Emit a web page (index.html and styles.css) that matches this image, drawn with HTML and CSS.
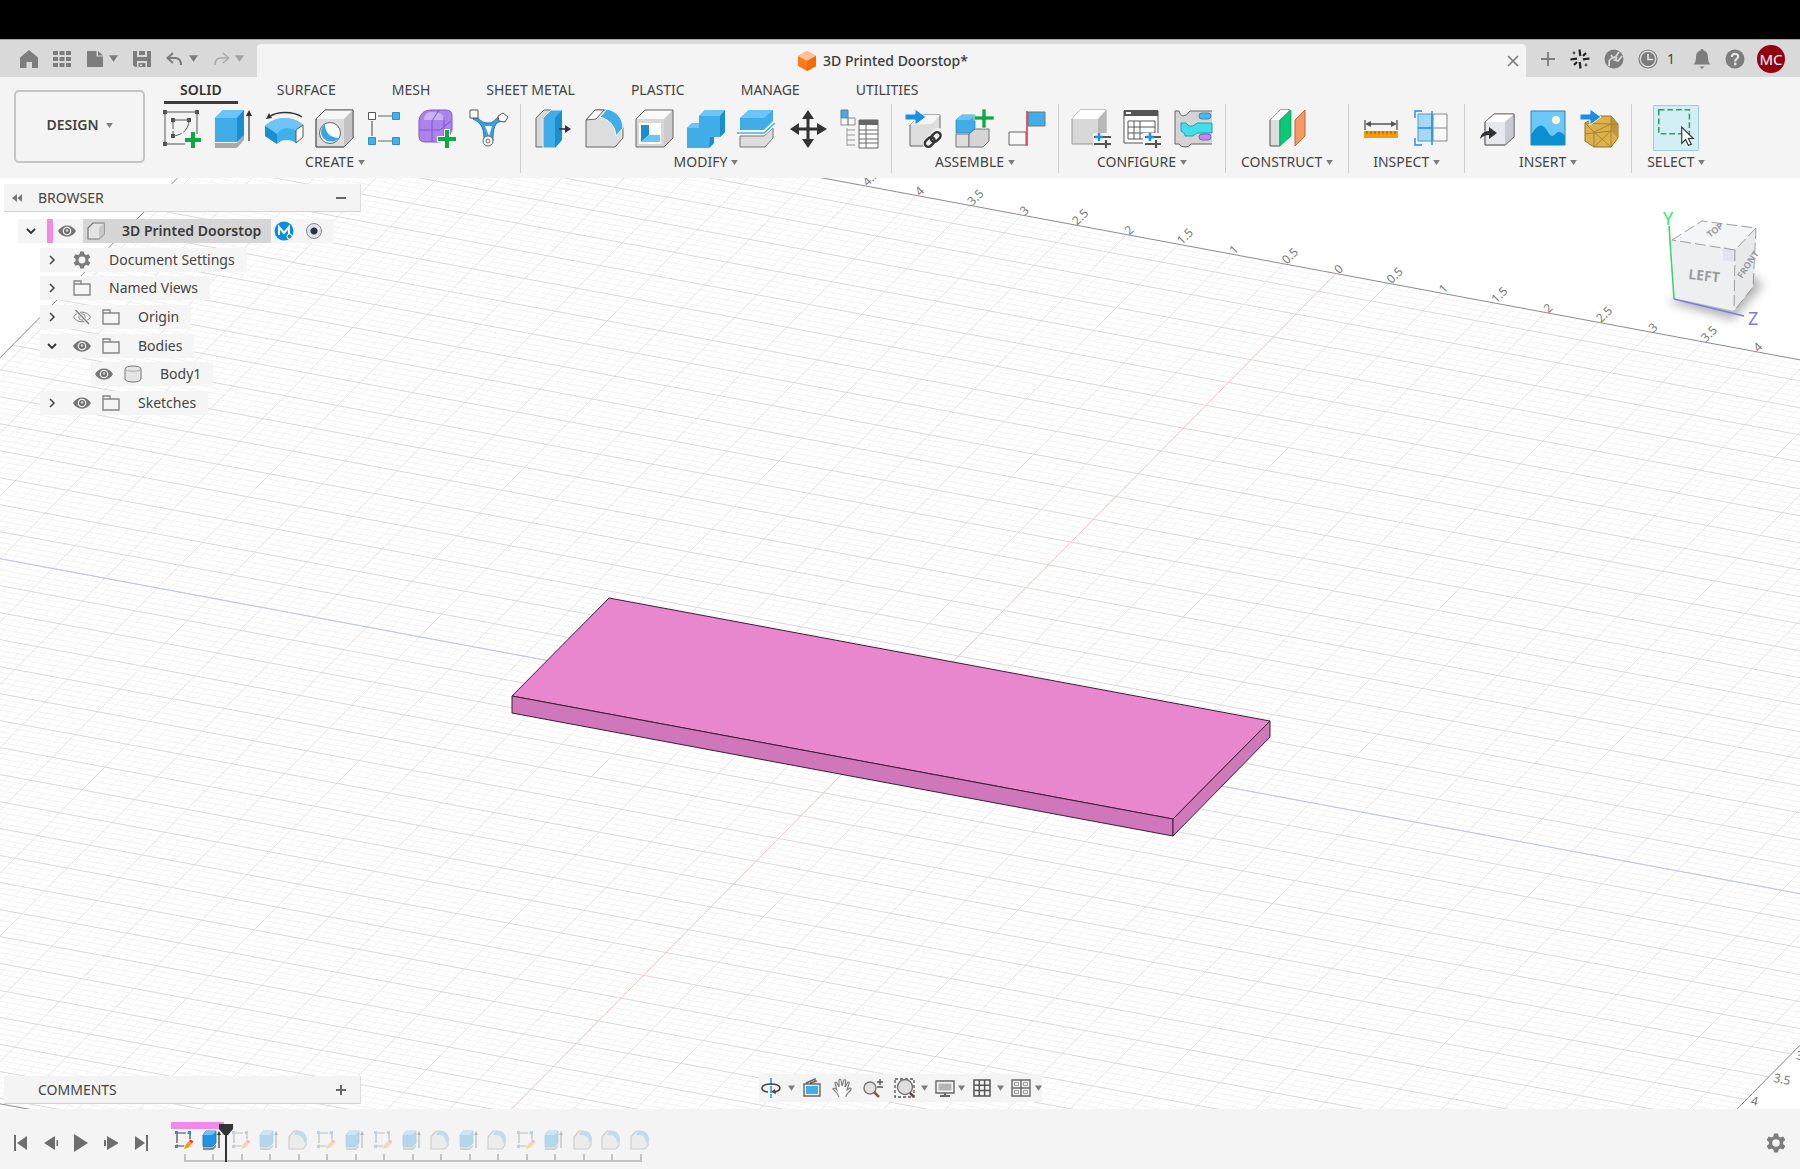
FILE: index.html
```html
<!DOCTYPE html>
<html lang="en">
<head>
<meta charset="utf-8">
<title>3D Printed Doorstop</title>
<link rel="stylesheet" href="styles.css">
</head>
<body>
<svg class="defs" aria-hidden="true">
  <symbol id="caret" viewBox="0 0 8 6"><path d="M0 0h8L4 6z" fill="currentColor"/></symbol>
  <symbol id="chev-right" viewBox="0 0 10 10"><path d="M3 1l4 4-4 4" fill="none" stroke="#444" stroke-width="1.5"/></symbol>
  <symbol id="chev-down" viewBox="0 0 10 10"><path d="M1 3l4 4 4-4" fill="none" stroke="#333" stroke-width="1.8"/></symbol>
  <symbol id="eye" viewBox="0 0 18 18"><path d="M0 9C4 1.500 14 1.500 18 9 14 16.500 4 16.500 0 9z" fill="#757575"/><circle cx="9" cy="9" r="4.300" fill="#f4f4f4"/><circle cx="9" cy="9" r="3" fill="#6a6a6a"/><circle cx="9" cy="8.500" r="1.300" fill="#ddd"/></symbol>
  <symbol id="eye-off" viewBox="0 0 18 18"><path d="M0.500 9C4.500 2.500 13.500 2.500 17.500 9 13.500 15.500 4.500 15.500 0.500 9z" fill="none" stroke="#858585"/><circle cx="9" cy="9" r="3.200" fill="none" stroke="#858585"/><path d="M2.500 2l13.500 14" stroke="#f4f4f4" stroke-width="3"/><path d="M2.500 2l13.500 14" stroke="#757575" stroke-width="1.200"/></symbol>
  <symbol id="folder" viewBox="0 0 18 16"><path d="M1 1h7v3h9v11H1z M1 4h7" fill="none" stroke="#858585" stroke-width="1.400"/></symbol>
  <symbol id="gear" viewBox="0 0 20 20"><path d="M8 0.500h4l.6 2.900 1.900 1.100 2.800-1 2 3.500-2.200 1.900v2.200l2.200 1.900-2 3.500-2.800-1-1.900 1.100-.6 2.900H8l-.6-2.900-1.900-1.100-2.800 1-2-3.500 2.200-1.900V8.900L.7 7l2-3.500 2.800 1 1.900-1.100zM10 6.200a3.800 3.800 0 100 7.600 3.800 3.800 0 000-7.600z" fill="#7d7d7d" fill-rule="evenodd"/></symbol>
  <symbol id="t-sketch" viewBox="0 0 20 20"><path d="M3 3h13v13H3z" fill="none" stroke="#444" stroke-width="1.200" stroke-dasharray="9 1.500"/><path d="M1 1h3v3H1zM14 1h3v3h-3zM1 15h3v3H1z" fill="#1f8fd8"/><path d="M9 20l2-5 5-6 4 2.500-5 6.500z" fill="#f4f4f4"/><path d="M10 19l1.500-4 3.500-4 3 2.500-3.500 4z" fill="#f39c12"/><path d="M15 11l1.500-1.500 3 2L18 13.500z" fill="#e33"/></symbol>
  <symbol id="t-extrude" viewBox="0 0 20 20"><path d="M1 17.500h9.500l3.500-3v2.500L11 20H1z" fill="#888"/><path d="M1 5l3-4h10v12l-3.500 3.500H1z" fill="#2196e0" stroke="#1c6ea6" stroke-width=".8"/><path d="M1 5l3-4h10l-3.500 4z" fill="#6cc4f7"/><path d="M17 18V3" stroke="#333" stroke-width="1.200"/><path d="M15 5l2-4 2 4z" fill="#333"/></symbol>
  <symbol id="t-fillet" viewBox="0 0 20 20"><path d="M1 7l5-6h4c5 0 8 4 8 8v6l-3 4H1z" fill="#ddd" stroke="#777" stroke-width="1.200"/><path d="M8 1h3c5 0 8 5 8 9l-3 3c0-5-3-8-7-8H6z" fill="#45aee8"/></symbol>
</svg>

<div class="app">
  <div class="strip"></div>

  <header class="topbar">
    <nav class="quick" aria-label="Quick access">
      <button class="tool q-home" aria-label="Home"><svg width="18" height="18" viewBox="0 0 18 18"><path d="M0 7.500L9 0l9 7.500V18h-6v-6H6.500v6H0z" fill="#7d7d7d"/></svg></button>
      <button class="tool q-grid" aria-label="Data panel"><svg width="18" height="18" viewBox="0 0 18 18"><path d="M0 1h5v4H0zM6.500 1h5v4h-5zM13 1h5v4h-5zM0 7h5v4H0zM6.500 7h5v4h-5zM13 7h5v4h-5zM0 13h5v4H0zM6.500 13h5v4h-5zM13 13h5v4h-5z" fill="#7d7d7d"/></svg></button>
      <button class="tool q-file" aria-label="File"><svg width="18" height="18" viewBox="0 0 18 18"><path d="M1 1h9.500v5.500H17V17H1zM12 1l5 4.500h-5z" fill="#7d7d7d"/></svg><svg class="caret" width="9" height="7"><use href="#caret"/></svg></button>
      <button class="tool q-save" aria-label="Save"><svg width="18" height="18" viewBox="0 0 18 18"><path d="M0 1h4v6h10V1h4v16h-4v-6H4v6H2l-2-2zM6 1h6v4H6zM5.500 13h7v4h-7z" fill="#7d7d7d"/><path d="M7 14.500h2V16H7z" fill="#d9d9d9"/></svg></button>
      <button class="tool q-undo" aria-label="Undo"><svg width="18" height="14" viewBox="0 0 18 14"><path d="M2 6h7c4 0 6 3 6 7" fill="none" stroke="#7d7d7d" stroke-width="2"/><path d="M7 1L1.500 6 7 11" fill="none" stroke="#7d7d7d" stroke-width="2"/></svg><svg class="caret" width="9" height="7"><use href="#caret"/></svg></button>
      <button class="tool q-redo" aria-label="Redo"><svg width="18" height="14" viewBox="0 0 18 14"><path d="M16 6H9c-4 0-6 3-6 7" fill="none" stroke="#a9a9a9" stroke-width="1.600"/><path d="M11 1l5.500 5L11 11" fill="none" stroke="#a9a9a9" stroke-width="1.600"/></svg><svg class="caret faint" width="9" height="7"><use href="#caret"/></svg></button>
    </nav>
    <div class="doc-tab">
      <svg width="18" height="20" viewBox="0 0 18 20"><path d="M9 0l9 5v10l-9 5-9-5V5z" fill="#ff7a1a"/><path d="M9 0l9 5-9 5-9-5z" fill="#ffc09a"/><path d="M9 10l9-5v10l-9 5z" fill="#f56a06"/></svg>
      <span class="doc-title">3D Printed Doorstop*</span>
      <button class="tool doc-close" aria-label="Close"><svg width="12" height="12" viewBox="0 0 12 12"><path d="M1 1l10 10M11 1L1 11" stroke="#777" stroke-width="1.500"/></svg></button>
    </div>
    <nav class="status" aria-label="Account">
      <button class="tool" aria-label="New tab"><svg width="16" height="16" viewBox="0 0 16 16"><path d="M8 1v14M1 8h14" stroke="#7d7d7d" stroke-width="1.800"/></svg></button>
      <button class="tool" aria-label="Extensions"><svg width="20" height="20" viewBox="0 0 20 20"><g stroke="#222" stroke-width="2.200"><path d="M9.500 0.500l.8 6.500M19.500 9.500l-6.500.8M10.500 19.500l-.8-6.500M.5 10.500l6.500-.8M4 16l3-3M16 4l-3 3" /></g><g fill="#555"><circle cx="4" cy="4" r="1.400"/><circle cx="16" cy="16" r="1.400"/></g></svg></button>
      <button class="tool" aria-label="Online"><svg width="20" height="20" viewBox="0 0 20 20"><circle cx="10" cy="10" r="9.500" fill="#7d7d7d"/><path d="M5 17c0-5 0-7 4-8l-2-3M9 9c3-3 5 0 2 2l3 1 4-5M12 7l3-4" fill="none" stroke="#d9d9d9" stroke-width="1.800"/></svg></button>
      <button class="tool jobs" aria-label="Job status"><svg width="20" height="20" viewBox="0 0 20 20"><circle cx="10" cy="10" r="9" fill="none" stroke="#7d7d7d" stroke-width="1.200"/><circle cx="10" cy="10" r="7" fill="#7d7d7d"/><path d="M10 5v5.500h5" fill="none" stroke="#e6e6e6" stroke-width="1.600"/></svg><span>1</span></button>
      <button class="tool" aria-label="Notifications"><svg width="18" height="20" viewBox="0 0 18 20"><path d="M9 0c1 0 1.500.6 1.500 1.500C14 2.200 15 5 15 9c0 3 1 5 2.500 6.500H.5C2 14 3 12 3 9c0-4 1-6.800 4.500-7.500C7.500.6 8 0 9 0zM6.500 17.500h5L9 20z" fill="#7d7d7d"/></svg></button>
      <button class="tool" aria-label="Help"><svg width="20" height="20" viewBox="0 0 20 20"><circle cx="10" cy="10" r="9.500" fill="#7d7d7d"/><path d="M6.800 8c0-4.200 6.400-4 6.400-.6 0 2.300-3 2.300-3 5" fill="none" stroke="#e4e4e4" stroke-width="2.200"/><circle cx="10.200" cy="15" r="1.400" fill="#e4e4e4"/></svg></button>
      <button class="avatar">MC</button>
    </nav>
  </header>

  <section class="ribbon">
    <button class="workspace-switch">DESIGN <svg class="caret" width="7" height="5"><use href="#caret"/></svg></button>
    <div class="ribbon-body">
      <div class="tabs" role="tablist">
        <button class="tab active" role="tab" aria-selected="true">SOLID</button>
        <button class="tab" role="tab">SURFACE</button>
        <button class="tab" role="tab">MESH</button>
        <button class="tab" role="tab">SHEET METAL</button>
        <button class="tab" role="tab">PLASTIC</button>
        <button class="tab" role="tab">MANAGE</button>
        <button class="tab" role="tab">UTILITIES</button>
      </div>
      <div class="groups">
        <div class="group">
          <div class="icons">
            <button class="ico" aria-label="Create sketch"><svg viewBox="0 0 40 40"><path d="M3 4h32v22M3 4v32h20" fill="none" stroke="#555"/><path d="M11 12h16c0 9-6 15-16 16z" fill="none" stroke="#555" stroke-dasharray="14 2"/><path d="M1 2h4v4H1zM33 2h4v4h-4zM1 34h4v4H1zM9 10h4v4H9zM25 10h4v4h-4zM9 26h4v4H9z" fill="#555"/><path d="M28 23h6v6h6v6h-6v6h-6v-6h-6v-6h6z" fill="#f4f4f4"/><path d="M29 24h4v6h6v4h-6v6h-4v-6h-6v-4h6z" fill="#0ca944"/></svg></button>
            <button class="ico" aria-label="Extrude"><svg viewBox="0 0 40 40"><path d="M2 35h22l7-8v5l-7 8H2z" fill="#aaa"/><path d="M2 10l8-8h21v25l-7 7H2z" fill="#41ade8"/><path d="M2 10l8-8h21l-7 8z" fill="#6cc4f7"/><path d="M24 10l7-8v25l-7 7z" fill="#1a8fd0"/><path d="M36 33V5" stroke="#333" stroke-width="1.200"/><path d="M33 8l3-6 3 6z" fill="#333"/></svg></button>
            <button class="ico" aria-label="Revolve"><svg viewBox="0 0 40 40"><path d="M5 9c8-6 24-6 33 0" fill="none" stroke="#333" stroke-width="1.300"/><path d="M2 11l3-6 3 5z" fill="#333"/><path d="M1 18c10-10 27-11 38-1l-7 6v12c-5-4-15-4-19 1L1 28z" fill="#3fb0ea"/><path d="M1 18c10-10 27-11 38-1l-7 6c-5-4-15-4-19 3z" fill="#6cc4f7"/><path d="M1 18l12 8v10L1 28z" fill="#1a8fd0"/><path d="M32 22l7-5v12l-7 6z" fill="#fff" stroke="#555"/></svg></button>
            <button class="ico" aria-label="Hole"><svg viewBox="0 0 40 40"><path d="M1 11l9-9h28v28l-9 9H1z" fill="#ddd" stroke="#666"/><path d="M1 11l9-9h28l-9 9z" fill="#f7f7f7"/><path d="M29 11l9-9v28l-9 9z" fill="#c4c4c4"/><path d="M1 11l9-9h28v28l-9 9H1z" fill="none" stroke="#666"/><circle cx="15" cy="25" r="10.500" fill="#fff" stroke="#666"/><path d="M10 16c0 9 6 14 14 14-6 7-17 3-18-5 0-4 1-7 4-9z" fill="#38a7e6"/></svg></button>
            <button class="ico" aria-label="Rectangular pattern"><svg viewBox="0 0 40 40"><path d="M12 8h14M6 13v15M12 33h14" stroke="#666" stroke-width="1.200"/><path d="M2.500 4.500h7v7h-7z" fill="#fff" stroke="#555"/><path d="M26.500 4.500h7v7h-7zM2.500 29.500h7v7h-7zM26.500 29.500h7v7h-7z" fill="#42afee" stroke="#2f8fc8"/></svg></button>
            <button class="ico" aria-label="Create form"><svg viewBox="0 0 40 40"><path d="M2 12Q4 2 14 2h15q6 0 6 6v14q-4 12-14 12H8q-6 0-6-6z" fill="#ab82ee" stroke="#8557c4"/><path d="M7 12h21q-1-8-13-8Q7 4 7 12z" fill="#cdb2fa"/><path d="M2 22h21l11-9M15 34V13L22 2M27 9v22" fill="none" stroke="#8057be"/><path d="M27 21h6v7h7v6h-7v7h-6v-7h-7v-6h7z" fill="#f4f4f4"/><path d="M28 22h4v7h7v4h-7v7h-4v-7h-7v-4h7z" fill="#0ca944"/></svg></button>
            <button class="ico" aria-label="Automated modeling"><svg viewBox="0 0 40 40"><path d="M5 7c6 1 6 8 15 8 7 0 6-5 12-6l1 4c-6 2-8 6-8 20h-9c0-10-1-18-11-22z" fill="#3a9fe0" stroke="#2879b4"/><path d="M17 18h7l-3 10z" fill="#fff"/><path d="M2 2h8v8H2z" fill="#fff" stroke="#555"/><path d="M30 8l5-3 5 4-3 5-6-1z" fill="#fff" stroke="#555"/><circle cx="20" cy="33" r="5" fill="#fff" stroke="#666"/><circle cx="20" cy="33" r="2" fill="none" stroke="#666"/></svg></button>
          </div>
          <button class="group-label">CREATE<svg class="caret" width="7" height="5"><use href="#caret"/></svg></button>
        </div>
        <div class="group">
          <div class="icons">
            <button class="ico" aria-label="Press pull"><svg viewBox="0 0 40 40"><path d="M3 10l8-8h7v37H3z" fill="#d8d8d8" stroke="#666"/><path d="M10 10l8-8h11v30l-7 8H10z" fill="#41ade8" stroke="#f4f4f4"/><path d="M22 10l7-8v30l-7 8z" fill="#1a8fd0"/><path d="M26 21h7" stroke="#333" stroke-width="1.600"/><path d="M32 17l6 4-6 4z" fill="#333"/></svg></button>
            <button class="ico" aria-label="Fillet"><svg viewBox="0 0 40 40"><path d="M2 12l9-10h8c12 0 20 10 20 19v9l-8 9H2z" fill="#ddd" stroke="#666"/><path d="M2 12l9-10h9l-8 9z" fill="#fff" stroke="#666"/><path d="M23 1c10 2 16 10 16 19l-7 8C31 18 26 12 16 9z" fill="#41ade8" stroke="#fff"/></svg></button>
            <button class="ico" aria-label="Shell"><svg viewBox="0 0 40 40"><path d="M1 11l9-9h28v28l-9 9H1z" fill="#d8d8d8"/><path d="M1 11l9-9h28l-9 9z" fill="#fafafa"/><path d="M29 11l9-9v28l-9 9z" fill="#ccc"/><path d="M1 11l9-9h28v28l-9 9H1z" fill="none" stroke="#666"/><path d="M4 15h22v21H4z" fill="#fff"/><path d="M6 17h8v10l-8 7z" fill="#1a8fd0"/><path d="M14 27h11v7H6z" fill="#6cc4f7"/></svg></button>
            <button class="ico" aria-label="Combine"><svg viewBox="0 0 40 40"><path d="M1 20l5-5h7V8l6-6h20v22l-5 5h-6v6l-5 5H1z" fill="#41ade8"/><path d="M1 20l5-5h7v5zM13 8l6-6h20l-5 6z" fill="#6cc4f7"/><path d="M34 8l5-6v22l-5 5zM24 29h4v6l-5 5z" fill="#1a8fd0"/></svg></button>
            <button class="ico" aria-label="Split body"><svg viewBox="0 0 40 40"><path d="M3 28h24l9-8v10l-8 9H3z" fill="#ddd" stroke="#777"/><path d="M3 10l9-8h24v11l-9 9H3z" fill="#41ade8"/><path d="M3 10l9-8h24l-9 8z" fill="#6cc4f7"/><path d="M0 25h27l11-10" fill="none" stroke="#fff" stroke-width="4"/><path d="M0 25h27l11-10" fill="none" stroke="#41ade8" stroke-width="1.600"/></svg></button>
            <button class="ico" aria-label="Move"><svg viewBox="0 0 40 40"><path d="M20 8v25M8 21h24" stroke="#333" stroke-width="3"/><path d="M14 11l6-9 6 9zM14 31l6 9 6-9zM11 15l-9 6 9 6zM29 15l10 6-10 6z" fill="#333"/></svg></button>
            <button class="ico" aria-label="Parameters"><svg viewBox="0 0 40 40"><path d="M2 2h7v8H2z" fill="#41ade8" stroke="#777"/><path d="M2 10h7v7H2zM9 10h7v7H9z" fill="#fff" stroke="#888"/><path d="M8 20v18M8 22h8M8 27h8M8 32h8M8 37h8" stroke="#999"/><path d="M20 12h19v28H20z" fill="#fff" stroke="#666"/><path d="M20 12h19v5H20z" fill="#666"/><path d="M20 22h19M20 26h19M20 31h19M20 35h19M27 17v23" stroke="#666"/></svg></button>
          </div>
          <button class="group-label">MODIFY<svg class="caret" width="7" height="5"><use href="#caret"/></svg></button>
        </div>
        <div class="group">
          <div class="icons">
            <button class="ico" aria-label="Insert component"><svg viewBox="0 0 40 40"><path d="M6 17l10-10h20v24l-8 7H6z" fill="#ddd" stroke="#666"/><path d="M6 17l10-10h20l-8 9z" fill="#f5f5f5"/><path d="M1 6h10V1l11 8-11 8v-5H1z" fill="#1a8fe8" stroke="#f4f4f4"/><g fill="none" stroke="#f4f4f4" stroke-width="6"><rect x="-5" y="-3" width="11" height="7" rx="3.500" transform="translate(26 34) rotate(-45)"/><rect x="-5" y="-3" width="11" height="7" rx="3.500" transform="translate(32 28) rotate(-45)"/></g><g fill="none" stroke="#333" stroke-width="2.400"><rect x="-5" y="-3" width="11" height="7" rx="3.500" transform="translate(25 34) rotate(-45)"/><rect x="-5" y="-3" width="11" height="7" rx="3.500" transform="translate(31 29) rotate(-45)"/></g></svg></button>
            <button class="ico" aria-label="New component"><svg viewBox="0 0 40 40"><path d="M1 26h13v13H1z" fill="#ddd" stroke="#777"/><path d="M14 26l6-5h14v12l-6 6H14z" fill="#d5d5d5" stroke="#777"/><path d="M1 12l6-5h13v13l-5 5H1z" fill="#41ade8" stroke="#2a82b8" stroke-width=".7"/><path d="M1 12l6-5h13l-5 5z" fill="#6cc4f7"/><path d="M27 1h4v7h8v4h-8v8h-4v-8h-8V8h8z" fill="#0ca944" stroke="#f4f4f4" stroke-width=".7"/></svg></button>
            <button class="ico" aria-label="Joint"><svg viewBox="0 0 40 40"><path d="M3 24h17v13H3z" fill="#f8f8f8" stroke="#666"/><path d="M22 4h17v14H22z" fill="#41ade8" stroke="#777"/><path d="M21 3v35" stroke="#d23" stroke-width="1.400"/></svg></button>
          </div>
          <button class="group-label">ASSEMBLE<svg class="caret" width="7" height="5"><use href="#caret"/></svg></button>
        </div>
        <div class="group">
          <div class="icons">
            <button class="ico" aria-label="Configure"><svg viewBox="0 0 40 40"><path d="M1 11l8-9h26v25l-8 9H1z" fill="#d8d8d8" stroke="#999"/><path d="M1 11l8-9h26l-8 9z" fill="#fff"/><path d="M27 11l8-9v25l-8 9z" fill="#b8b8b8"/><path d="M22 25h20v15H22z" fill="#f4f4f4"/><path d="M23 29h17M23 36h17M35 32v8" stroke="#555" stroke-width="2.200"/><path d="M28 25v8M24 29h8" stroke="#1a8fe8" stroke-width="2.400"/></svg></button>
            <button class="ico" aria-label="Configuration table"><svg viewBox="0 0 40 40"><path d="M2 3h34v32H2z" fill="#fff" stroke="#555"/><path d="M2 2h34v6H2z" fill="#555"/><path d="M4 4h5v2H4z" fill="#fff"/><path d="M6 13h27v18H6zM6 19h27M6 25h27M12 13v18M18 13v18" fill="none" stroke="#555"/><path d="M21 25h20v15H21z" fill="#f4f4f4"/><path d="M23 29h16M23 36h16M34 32v8" stroke="#555" stroke-width="2.200"/><path d="M28 25v8M24 29h8" stroke="#1a8fe8" stroke-width="2.400"/></svg></button>
            <button class="ico" aria-label="Configuration rules"><svg viewBox="0 0 40 40"><path d="M39 3H17q-3 5-7 5-3 0-4-5H2v33h4q2 3 6 3t6-3h21" fill="#d4d4d4" stroke="#666"/><path d="M39 15H24l-4 3h-4l-3-3H8v8l4 3v2h8l4-3h15z" fill="#3fe0ea" stroke="#2a9ca8"/><rect x="26" y="5" width="12" height="6" rx="3" fill="#4ab8f2" stroke="#3a88b8"/><rect x="26" y="26" width="12" height="6" rx="3" fill="#c08af5" stroke="#8a5ab8"/></svg></button>
          </div>
          <button class="group-label">CONFIGURE<svg class="caret" width="7" height="5"><use href="#caret"/></svg></button>
        </div>
        <div class="group">
          <div class="icons">
            <button class="ico" aria-label="Offset plane"><svg viewBox="0 0 40 40"><path d="M3 12L13 2h10L13 12v26H3z" fill="#ddd" stroke="#555"/><path d="M3 12L13 2h10L13 12z" fill="#fff"/><path d="M13 12L24 2v26L13 38z" fill="#0bc878" stroke="#0a9b5c" stroke-width=".7"/><path d="M28 12L38 2v26L28 38z" fill="#f49a62" stroke="#b8663a"/></svg></button>
          </div>
          <button class="group-label">CONSTRUCT<svg class="caret" width="7" height="5"><use href="#caret"/></svg></button>
        </div>
        <div class="group">
          <div class="icons">
            <button class="ico" aria-label="Measure"><svg viewBox="0 0 40 40"><path d="M4 12v10M36 12v10M6 16h28" stroke="#555" stroke-width="1.300"/><path d="M4 16l6-3v6zM36 16l-6-3v6z" fill="#555"/><path d="M3 23h34v7H3z" fill="#f79a0c"/><path d="M6 23v3M10 23v3M14 23v3M18 23v3M22 23v3M26 23v3M30 23v3M34 23v3" stroke="#8a5500"/></svg></button>
            <button class="ico" aria-label="Section analysis"><svg viewBox="0 0 40 40"><path d="M21 6h14v27H21zM21 20h14" fill="#f8f8f8" stroke="#888"/><path d="M6 6h14v27H6z" fill="#a8d8f6" stroke="#3a9fe0"/><path d="M6 20h14M20 3v34M3 10V3h7M3 30v7h7" fill="none" stroke="#1a8fe0" stroke-width="1.400"/></svg></button>
          </div>
          <button class="group-label">INSPECT<svg class="caret" width="7" height="5"><use href="#caret"/></svg></button>
        </div>
        <div class="group">
          <div class="icons">
            <button class="ico" aria-label="Insert derive"><svg viewBox="0 0 40 40"><path d="M8 14l9-8h20v23l-9 8H8z" fill="#e6e8ee" stroke="#777"/><path d="M8 14l9-8h20l-9 8z" fill="#fff"/><path d="M28 14l9-8v23l-9 8z" fill="#c8cad2"/><path d="M8 14l9-8h20v23l-9 8H8z" fill="none" stroke="#777"/><path d="M3 31c1-6 5-8 9-8v-4l8 6-8 6v-4c-4 0-6 1-9 4z" fill="#333"/></svg></button>
            <button class="ico" aria-label="Canvas"><svg viewBox="0 0 40 40"><path d="M3 3h34v34H3z" fill="#6cc8fa" stroke="#2a82b8"/><circle cx="28" cy="12" r="4" fill="#fdf6d0"/><path d="M3 27c5-8 9-12 13-8 4 3 5 9 8 9s4-4 7-4 4 2 6 4v9H3z" fill="#0a8fd0"/></svg></button>
            <button class="ico" aria-label="Insert mesh"><svg viewBox="0 0 40 40"><path d="M6 15l12-7h14l7 8v14l-7 9H15l-9-6z" fill="#dcb14c" stroke="#96701c"/><path d="M32 8l7 8v14l-7-7z" fill="#c0943a"/><path d="M6 15l9 9 17-8 7 0M15 24l17 15M6 26l26-3M15 39l17-16M6 15l26 1M15 24v15M32 8v31" fill="none" stroke="#a17d2e" stroke-width=".9"/><path d="M1 6h10V1l11 8-11 8v-5H1z" fill="#1a8fe8" stroke="#f4f4f4"/></svg></button>
          </div>
          <button class="group-label">INSERT<svg class="caret" width="7" height="5"><use href="#caret"/></svg></button>
        </div>
        <div class="group">
          <div class="icons">
            <button class="ico selected" aria-label="Select"><svg viewBox="0 0 46 46"><path d="M5 4h32v25H5z" fill="none" stroke="#22a558" stroke-width="1.600" stroke-dasharray="6 3"/><path d="M29 22v17l4-4 3 6 3-1-3-6h5z" fill="#fff" stroke="#333" stroke-width="1.200"/></svg></button>
          </div>
          <button class="group-label">SELECT<svg class="caret" width="7" height="5"><use href="#caret"/></svg></button>
        </div>
      </div>
    </div>
  </section>

  <main class="viewport">
    <svg class="scene" viewBox="0 178 1800 931" preserveAspectRatio="xMidYMid slice">
      <path id="minor" class="grid-minor"/>
      <path id="major-v" class="grid-major light"/>
      <path id="major-u" class="grid-major"/>
      <path id="border" class="grid-border"/>
      <path id="axis-z" stroke="#c2c2f5"/>
      <path id="axis-x" stroke="#f8c8c6"/>
      <g id="ruler" class="ruler"></g>
      <g stroke="#3a1f38" stroke-linejoin="round">
        <path d="M609 598L1270 721L1173 819L512 696z" fill="#e887cd"/>
        <path d="M512 696L1173 819V836L512 713z" fill="#d077bc"/>
        <path d="M1173 819L1270 721V737L1173 836z" fill="#cf7ab8"/>
      </g>
    </svg>

    <svg class="viewcube" width="150" height="140" viewBox="1650 200 150 140" role="img" aria-label="View cube">
      <defs><filter id="soft" x="-50%" y="-50%" width="200%" height="200%"><feGaussianBlur stdDeviation="5"/></filter></defs>
      <path d="M1667 302l66 18 30-34-10-12z" fill="#999" opacity=".7" filter="url(#soft)"/>
      <path d="M1672 240l30-19 54 7-21 22z" fill="#f4f5f6"/>
      <path d="M1672 240l63 10-1 61-60-13z" fill="#eeeff1"/>
      <path d="M1735 250l21-22-3 59-19 24z" fill="#e8e9eb"/>
      <path d="M1723 246l12 4v12l-12-2z" fill="#dfe3ee"/>
      <path d="M1672 240l30-19 54 7-21 22zM1735 250l-1 61M1756 228l-3 59-19 24" fill="none" stroke="#888" stroke-width=".8" stroke-dasharray="11 4"/>
      <path d="M1669 226l5 73" stroke="#37d867" stroke-width="1.600"/>
      <path d="M1674 299l70 17" stroke="#7b7be8" stroke-width="1.600"/>
      <text x="1663" y="225" class="axis-label" fill="#37e86a">Y</text>
      <text x="1748" y="325" class="axis-label" fill="#7b7bf0">Z</text>
      <text class="face" transform="translate(1688 279) rotate(6)">LEFT</text>
      <text class="face small" transform="translate(1742 279) rotate(-56)">FRONT</text>
      <text class="face small" transform="translate(1710 238) rotate(-38)">TOP</text>
    </svg>

    <aside class="side">
      <section class="browser">
        <div class="panel-head">
          <button class="tool head-collapse" aria-label="Collapse"><svg width="10" height="8" viewBox="0 0 10 8"><path d="M5 0v8L0 4zM10 0v8L5.500 4z" fill="#777"/></svg></button>
          <h2>BROWSER</h2>
          <button class="tool head-action" aria-label="Minimize"><svg width="10" height="10" viewBox="0 0 10 10"><path d="M0 5h10" stroke="#666" stroke-width="2"/></svg></button>
        </div>
        <ul class="tree">
          <li class="row root">
            <button class="tool twist" aria-label="Collapse"><svg width="10" height="10"><use href="#chev-down"/></svg></button>
            <i class="tag"></i>
            <button class="tool vis" aria-label="Hide"><svg width="18" height="18"><use href="#eye"/></svg></button>
            <span class="node"><svg width="18" height="18" viewBox="0 0 18 18"><path d="M1 6l5-5h11v11l-5 5H1z" fill="#e4e4e4" stroke="#777" stroke-width="1.200"/><path d="M12 6l5-5v11l-5 5z" fill="#c8c8c8"/></svg><b>3D Printed Doorstop</b></span>
            <svg class="badge" width="20" height="20" viewBox="0 0 20 20"><circle cx="10" cy="10" r="9.500" fill="#0b8fdc"/><path d="M5 14V6l5 6 5-6v8" fill="none" stroke="#fff" stroke-width="2"/><circle cx="15.500" cy="15.500" r="2.500" fill="#0b8fdc" stroke="#fff"/></svg>
            <input class="activate" type="radio" name="active" checked aria-label="Activate component">
          </li>
          <li class="row">
            <button class="tool twist" aria-label="Expand"><svg width="10" height="10"><use href="#chev-right"/></svg></button>
            <svg class="kind" width="18" height="18"><use href="#gear"/></svg><span>Document Settings</span>
          </li>
          <li class="row">
            <button class="tool twist" aria-label="Expand"><svg width="10" height="10"><use href="#chev-right"/></svg></button>
            <svg class="kind" width="18" height="16"><use href="#folder"/></svg><span>Named Views</span>
          </li>
          <li class="row">
            <button class="tool twist" aria-label="Expand"><svg width="10" height="10"><use href="#chev-right"/></svg></button>
            <button class="tool vis" aria-label="Show"><svg width="18" height="18"><use href="#eye-off"/></svg></button>
            <svg class="kind" width="18" height="16"><use href="#folder"/></svg><span>Origin</span>
          </li>
          <li class="row">
            <button class="tool twist" aria-label="Collapse"><svg width="10" height="10"><use href="#chev-down"/></svg></button>
            <button class="tool vis" aria-label="Hide"><svg width="18" height="18"><use href="#eye"/></svg></button>
            <svg class="kind" width="18" height="16"><use href="#folder"/></svg><span>Bodies</span>
          </li>
          <li class="row leaf">
            <button class="tool vis" aria-label="Hide"><svg width="18" height="18"><use href="#eye"/></svg></button>
            <svg class="kind" width="18" height="18" viewBox="0 0 18 18"><path d="M1 4c0-4 16-4 16 0v10c0 4-16 4-16 0z" fill="#e4e4e4" stroke="#777"/><path d="M1 4c0 3 16 3 16 0" fill="none" stroke="#aaa"/></svg><span>Body1</span>
          </li>
          <li class="row">
            <button class="tool twist" aria-label="Expand"><svg width="10" height="10"><use href="#chev-right"/></svg></button>
            <button class="tool vis" aria-label="Hide"><svg width="18" height="18"><use href="#eye"/></svg></button>
            <svg class="kind" width="18" height="16"><use href="#folder"/></svg><span>Sketches</span>
          </li>
        </ul>
      </section>
      <section class="panel-head comments">
        <h2>COMMENTS</h2>
        <button class="tool head-action" aria-label="Expand comments"><svg width="10" height="10" viewBox="0 0 10 10"><path d="M0 5h10M5 0v10" stroke="#666" stroke-width="2"/></svg></button>
      </section>
    </aside>

    <nav class="navbar" aria-label="Navigation">
      <button class="tool n-orbit" aria-label="Orbit"><svg width="20" height="20" viewBox="0 0 20 20"><path d="M10 0v20" stroke="#2a9be8" stroke-width="1.600" stroke-dasharray="7 1"/><path d="M7 14C-2 13 -1 6 10 6s11 6 4 8" fill="none" stroke="#444" stroke-width="1.600"/><path d="M14 11l-4 3 5 2z" fill="#444"/></svg><svg class="caret" width="7" height="6"><use href="#caret"/></svg></button>
      <button class="tool n-look" aria-label="Look at"><svg width="18" height="20" viewBox="0 0 18 20"><path d="M1 6h16v12H1zM3 5l9-4v3M7 5l7-2" fill="#f4f4f4" stroke="#666" stroke-width="1.400"/><path d="M3 8h12v8H3z" fill="#41ade8"/></svg></button>
      <button class="tool n-pan" aria-label="Pan"><svg width="20" height="20" viewBox="0 0 20 20"><path d="M7 19c-1-4-4-6-6-8 1-2 3 0 4 1L3 5c1-2 2 0 2.500 1L7 9V2c1-2 2 0 2.200 1L10 8l2-6c2-1 2 1 1.500 2L13 9l3-5c2 0 1 2 .5 3L15 12l3-2c2 0 1 2 0 3-3 3-4 3-4 6" fill="#fff" stroke="#777" stroke-width="1.100"/></svg></button>
      <button class="tool n-zoom" aria-label="Zoom"><svg width="20" height="20" viewBox="0 0 20 20"><circle cx="7" cy="10" r="6" fill="#e0e0e0" stroke="#777" stroke-width="1.400"/><path d="M11 14l5 5" stroke="#8a5a40" stroke-width="2.500"/><path d="M14 4h6M17 1v6M14 9h6" stroke="#555" stroke-width="1.400"/></svg></button>
      <button class="tool n-fit" aria-label="Fit"><svg width="22" height="20" viewBox="0 0 22 20"><path d="M1 1h19v18H1z" fill="none" stroke="#555" stroke-width="1.300" stroke-dasharray="3 2"/><circle cx="11" cy="9" r="7.500" fill="#ddd" stroke="#777" stroke-width="1.400"/><path d="M16 15l4 4" stroke="#6a4a40" stroke-width="2.500"/></svg><svg class="caret" width="7" height="6"><use href="#caret"/></svg></button>
      <button class="tool n-display" aria-label="Display settings"><svg width="20" height="18" viewBox="0 0 20 18"><path d="M1 2h18v12H1z" fill="#f4f4f4" stroke="#666" stroke-width="1.400"/><path d="M3.500 4.500h13v7h-13z" fill="#b5b5b5"/><path d="M5 17h10M10 14v3" stroke="#666" stroke-width="2"/></svg><svg class="caret" width="7" height="6"><use href="#caret"/></svg></button>
      <button class="tool n-gridset" aria-label="Grid settings"><svg width="18" height="18" viewBox="0 0 18 18"><path d="M1 1h16v16H1zM1 6.300h16M1 11.600h16M6.300 1v16M11.600 1v16" fill="none" stroke="#555" stroke-width="1.500"/></svg><svg class="caret" width="7" height="6"><use href="#caret"/></svg></button>
      <button class="tool n-views" aria-label="Viewports"><svg width="20" height="18" viewBox="0 0 20 18"><path d="M1 1h18v16H1zM10 1v16M1 9h18" fill="none" stroke="#666" stroke-width="1.400"/><path d="M3.500 3.500h4v3h-4zM12.500 3.500h4v3h-4zM3.500 11.500h4v3h-4zM12.500 11.500h4v3h-4z" fill="none" stroke="#999"/></svg><svg class="caret" width="7" height="6"><use href="#caret"/></svg></button>
    </nav>
  </main>

  <footer class="timeline">
    <div class="playback">
      <button class="tool" aria-label="First"><svg width="14" height="18" viewBox="0 0 14 18"><path d="M0 1h2v16H0zM13 2v14L3 9z" fill="#6e6e6e"/></svg></button>
      <button class="tool" aria-label="Previous"><svg width="14" height="18" viewBox="0 0 14 18"><path d="M11 2v14L0 9zM12.500 6h1.500v6h-1.500z" fill="#6e6e6e"/></svg></button>
      <button class="tool" aria-label="Play"><svg width="14" height="18" viewBox="0 0 14 18"><path d="M0 0l14 9-14 9z" fill="#6e6e6e"/></svg></button>
      <button class="tool" aria-label="Next"><svg width="14" height="18" viewBox="0 0 14 18"><path d="M3 2v14l12-7zM0 6h2v6H0z" fill="#6e6e6e"/></svg></button>
      <button class="tool" aria-label="Last"><svg width="14" height="18" viewBox="0 0 14 18"><path d="M12 1h2v16h-2zM1 2v14l10-7z" fill="#6e6e6e"/></svg></button>
    </div>
    <div class="history">
      <div class="span"></div>
      <ol class="steps">
        <li><svg><use href="#t-sketch"/></svg></li>
        <li><svg><use href="#t-extrude"/></svg></li>
        <li class="future"><svg><use href="#t-sketch"/></svg></li>
        <li class="future"><svg><use href="#t-extrude"/></svg></li>
        <li class="future"><svg><use href="#t-fillet"/></svg></li>
        <li class="future"><svg><use href="#t-sketch"/></svg></li>
        <li class="future"><svg><use href="#t-extrude"/></svg></li>
        <li class="future"><svg><use href="#t-sketch"/></svg></li>
        <li class="future"><svg><use href="#t-extrude"/></svg></li>
        <li class="future"><svg><use href="#t-fillet"/></svg></li>
        <li class="future"><svg><use href="#t-extrude"/></svg></li>
        <li class="future"><svg><use href="#t-fillet"/></svg></li>
        <li class="future"><svg><use href="#t-sketch"/></svg></li>
        <li class="future"><svg><use href="#t-extrude"/></svg></li>
        <li class="future"><svg><use href="#t-fillet"/></svg></li>
        <li class="future"><svg><use href="#t-fillet"/></svg></li>
        <li class="future"><svg><use href="#t-fillet"/></svg></li>
      </ol>
      <svg class="marker" width="14" height="38" viewBox="0 0 14 38"><path d="M0 0h14v5L9 11H5L0 5z" fill="#333"/><path d="M7 8v30" stroke="#333" stroke-width="2"/></svg>
    </div>
    <button class="tool settings" aria-label="Settings"><svg width="20" height="20"><use href="#gear"/></svg></button>
  </footer>
</div>
<script src="scene.js"></script>
</body>
</html>
```
FILE: styles.css
```css
* { box-sizing: border-box; }

body {
  margin: 0;
  background: #fff;
  color: #444;
  font: 14px/20px "Noto Sans", "Open Sans", sans-serif;
}

h2 { margin: 0; font-size: 14px; font-weight: 400; }
ul, ol { margin: 0; padding: 0; list-style: none; }
button { font: inherit; color: inherit; cursor: pointer; }
.defs { position: absolute; width: 0; height: 0; }

.tool {
  display: flex;
  align-items: center;
  flex: none;
  padding: 0;
  border: 0;
  background: none;
}
.caret { color: #7d7d7d; flex: none; }
.caret.faint { color: #a3a3a3; }

.app { display: flex; flex-direction: column; min-height: 100vh; }
.strip { height: 39px; background: #000; }

/* Top bar */
.topbar {
  display: flex;
  height: 38px;
  background: #d9d9d9;
  border-top: 1px solid #a8a8a8;
}
.quick { display: flex; align-items: center; width: 257px; padding-left: 20px; }
.quick .tool { gap: 5px; margin-right: 15px; }
.quick .q-undo { margin-right: 14px; }
.quick .q-redo { margin-right: 0; }
.doc-tab {
  position: relative;
  display: flex;
  flex: 1;
  align-items: center;
  justify-content: center;
  gap: 7px;
  margin-top: 4px;
  padding-right: 17px;
  background: #f4f4f4;
  border-radius: 4px 4px 0 0;
}
.doc-title { font-weight: 500; color: #3c3c3c; }
.doc-close { position: absolute; right: 7px; }
.status { display: flex; align-items: center; gap: 14px; width: 274px; padding-left: 14px; }
.jobs { gap: 9px; margin-right: 4px; }
.avatar {
  width: 28px;
  height: 28px;
  padding: 0;
  border: 0;
  border-radius: 50%;
  background: #930010;
  color: #fff;
  font-size: 15px;
}
.status .avatar { margin-left: -2px; }

/* Ribbon */
.ribbon { display: flex; height: 101px; background: #f4f4f4; }
.workspace-switch {
  display: flex;
  align-items: center;
  justify-content: center;
  gap: 7px;
  width: 131px;
  height: 73px;
  margin: 13px 5px 0 14px;
  padding-bottom: 4px;
  border: 2px solid #c4c4c4;
  border-radius: 5px;
  background: none;
  font-weight: 600;
}
.ribbon-body { flex: 1; }
.tabs { display: flex; gap: 22px; padding-left: 14px; }
.tab {
  height: 27px;
  padding: 2px 17px 0;
  border: 0;
  border-bottom: 3px solid transparent;
  background: none;
}
.tab.active { padding: 2px 16px 0; font-weight: 600; color: #333; border-color: #3c3c3c; }
.groups { display: flex; }
.group {
  position: relative;
  display: flex;
  flex-direction: column;
  align-items: center;
  padding: 0 12px;
  border-right: 1px solid #cfcfcf;
}
.group:last-child { border: 0; }
.icons { display: flex; align-items: center; gap: 11px; height: 47px; }
.ico { width: 40px; height: 40px; padding: 0; border: 0; background: none; }
.ico svg { display: block; width: 100%; height: 100%; overflow: visible; }
.ico.selected { width: 46px; height: 46px; background: #d4eef6; border: 1px solid #9ccfe0; }
.group-label {
  display: flex;
  align-items: center;
  gap: 4px;
  height: 22px;
  padding: 0 3px;
  border: 0;
  background: none;
}

/* Viewport */
.viewport { position: relative; display: flex; flex: 1; overflow: hidden; background: #fff; }
.scene { position: absolute; inset: 0; width: 100%; height: 100%; }
.scene path { vector-effect: non-scaling-stroke; }
.grid-minor { stroke: #f4f4f4; fill: none; }
.grid-major { stroke: #dadada; fill: none; }
.grid-major.light { stroke: #e4e4e4; }
.grid-border { stroke: #8c8c8c; fill: none; }
.ruler { font-size: 12px; fill: #777; }
.viewcube { position: absolute; top: 22px; right: 0; }
.axis-label { font-size: 18px; }
.face { font-size: 14px; font-weight: 700; fill: #9a9da2; }
.face.small { font-size: 9px; }

.side { position: relative; display: flex; flex-direction: column; justify-content: space-between; padding: 6px 4px 5px; }
.panel-head {
  display: flex;
  align-items: center;
  width: 357px;
  height: 28px;
  padding: 0 14px 0 8px;
  background: #f4f4f4;
  border-bottom: 1px solid #d4d4d4;
  border-right: 1px solid #dedede;
}
.head-collapse { width: 26px; }
.head-action { margin-left: auto; }
.comments { padding-left: 34px; }
.tree {
  display: flex;
  flex-direction: column;
  align-items: flex-start;
  justify-content: space-between;
  height: 196px;
  margin: 7px 0 0 36px;
}
.row { display: flex; align-items: center; height: 24px; padding: 0 12px 0 7px; background: #f5f5f5; }
.row .twist { margin-right: 16px; }
.row .vis { margin-right: 11px; }
.row .kind { margin-right: 18px; }
.row.leaf { margin-left: 51px; padding-left: 4px; }
.root { margin-left: -22px; padding-left: 8px; }
.root .twist { margin-right: 11px; }
.tag { width: 6px; height: 24px; margin-right: 5px; background: #f08ae8; }
.root .vis { margin-right: 7px; }
.node { display: flex; align-items: center; gap: 17px; height: 24px; padding: 0 10px 0 4px; background: #d6d6d6; }
.node b { font-weight: 600; color: #3a3a3a; }
.badge { margin: 0 12px 0 3px; }
.activate {
  appearance: none;
  width: 16px;
  height: 16px;
  margin: 0;
  border: 1px solid #888;
  border-radius: 50%;
  background: radial-gradient(circle, #2c3140 0 3px, #dfe3ec 4px 8px);
}

.navbar {
  position: absolute;
  bottom: 7px;
  left: 50%;
  display: flex;
  align-items: center;
  width: 283px;
  height: 28px;
  padding-left: 2px;
  margin-left: -141px;
  background: #f4f4f4;
}
.navbar .tool { gap: 7px; margin-right: 11px; }
.navbar .n-orbit { margin-right: 8px; }
.navbar .n-fit { gap: 5px; margin-right: 7px; }
.navbar .n-display { gap: 3px; margin-right: 8px; }
.navbar .n-gridset { gap: 6px; margin-right: 7px; }
.navbar .n-views { gap: 4px; margin-right: 0; }

/* Timeline */
.timeline { display: flex; align-items: flex-start; height: 60px; padding: 0 14px; background: #f4f4f4; }
.playback { display: flex; gap: 16px; padding-top: 25px; }
.history { position: relative; width: 484px; margin-left: 23px; padding-top: 13px; }
.span { width: 53px; height: 7px; background: #f08ae8; }
.steps { display: grid; grid-template-columns: repeat(17, 1fr); }
.steps li { position: relative; height: 33px; padding: 1px 0 0 3px; }
.steps svg { display: block; width: 20px; height: 20px; }
.steps .future svg { opacity: 0.3; }
.steps li::before,
.steps li::after { content: ""; position: absolute; left: 13px; bottom: 0; background: #c4c4c4; }
.steps li::before { width: 2px; height: 8px; }
.steps li::after { width: 100%; height: 2px; }
.steps li:last-child::after { width: 2px; }
.marker { position: absolute; left: 48px; top: 15px; }
.settings { margin: 24px 0 0 auto; }
```
FILE: scene.js
```js
// Ground plane: origin, one half-unit step along each axis, and the plane's extents.
const origin = [891, 724.5];
const u = [52.4, 9.75];
const v = [-22.5, 22.8];
const uMin = -20.2, uMax = 19.76, vMin = -19.78, vMax = 20.2;

function at(s, t) {
  return (origin[0] + s * u[0] + t * v[0]).toFixed(1) + ' ' + (origin[1] + s * u[1] + t * v[1]).toFixed(1);
}
function line(s1, t1, s2, t2) {
  return 'M' + at(s1, t1) + 'L' + at(s2, t2);
}
function draw(id, d) {
  document.getElementById(id).setAttribute('d', d);
}

let minor = '', majorU = '', majorV = '';
for (let i = -101; i <= 101; i++) {
  const k = i / 5;
  if (k > vMin && k < vMax) {
    if (i % 5) minor += line(uMin, k, uMax, k);
    else majorU += line(uMin, k, uMax, k);
  }
  if (k > uMin && k < uMax) {
    if (i % 5) minor += line(k, vMin, k, vMax);
    else majorV += line(k, vMin, k, vMax);
  }
}
draw('minor', minor);
draw('major-u', majorU);
draw('major-v', majorV);
draw('border', 'M' + at(uMin, vMin) + 'L' + at(uMax, vMin) + 'L' + at(uMax, vMax) + 'L' + at(uMin, vMax) + 'z');
draw('axis-z', line(uMin, 0, uMax, 0));
draw('axis-x', line(0, vMin, 0, vMax));

const ruler = document.getElementById('ruler');
function label(value, s, t, dx, dy, angle) {
  const [x, y] = at(s, t).split(' ').map(Number);
  const el = document.createElementNS('http://www.w3.org/2000/svg', 'text');
  el.setAttribute('transform', `translate(${x + dx} ${y + dy}) rotate(${angle})`);
  el.textContent = value;
  ruler.append(el);
}
for (let i = -9; i <= 8; i++) label(Math.abs(i) / 2, i, vMin, 3, 1, -44);
for (let i = 6; i <= 8; i++) label(i / 2, uMax, i, 4, 5, 11);
```
